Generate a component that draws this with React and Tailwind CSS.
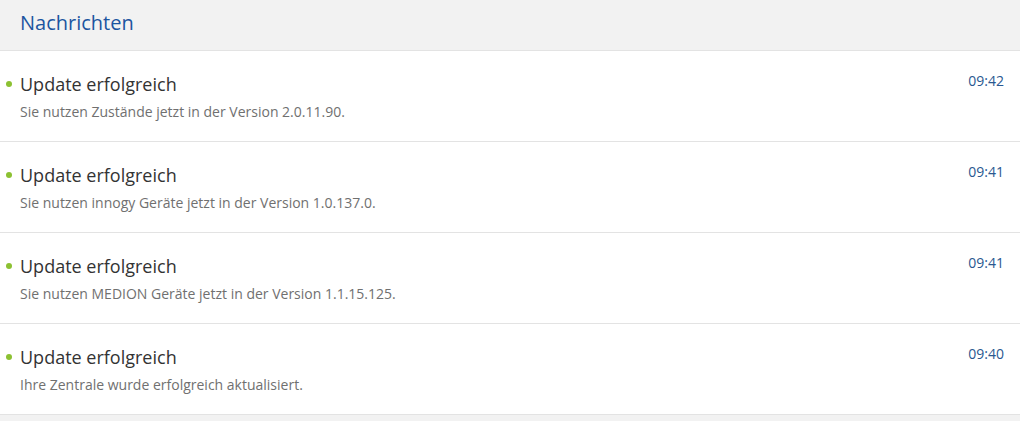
import React from "react";

const items = [
  { title: "Update erfolgreich", text: "Sie nutzen Zustände jetzt in der Version 2.0.11.90.", time: "09:42" },
  { title: "Update erfolgreich", text: "Sie nutzen innogy Geräte jetzt in der Version 1.0.137.0.", time: "09:41" },
  { title: "Update erfolgreich", text: "Sie nutzen MEDION Geräte jetzt in der Version 1.1.15.125.", time: "09:41" },
  { title: "Update erfolgreich", text: "Ihre Zentrale wurde erfolgreich aktualisiert.", time: "09:40" },
];

export default function App() {
  return (
    <div className="w-[1020px] h-[421px] bg-[#f2f2f2] overflow-hidden" style={{ fontFamily: '"Open Sans", sans-serif' }}>
      <div className="h-[51px] flex items-center px-[20px] border-b border-[#e3e3e3]">
        <h1 className="text-[20px] leading-[28px] text-[#1c55a0] mt-[-5px]">Nachrichten</h1>
      </div>
      <div className="bg-white">
        {items.map((it, i) => (
          <div key={i} className="relative h-[91px] border-b border-[#e3e3e3] flex justify-between pl-[20px] pr-[16px] pt-[21px]">
            <span className="absolute left-[6px] top-[30px] w-[6px] h-[6px] rounded-full bg-[#8cc132]"></span>
            <div className="flex flex-col">
              <div className="text-[18px] leading-[24px] text-[#333333]">{it.title}</div>
              <div className="text-[14px] leading-[20px] text-[#707070] mt-[6px]">{it.text}</div>
            </div>
            <div className="text-[14px] leading-[20px] text-[#2a5890] mt-[-1px]">{it.time}</div>
          </div>
        ))}
      </div>
    </div>
  );
}
